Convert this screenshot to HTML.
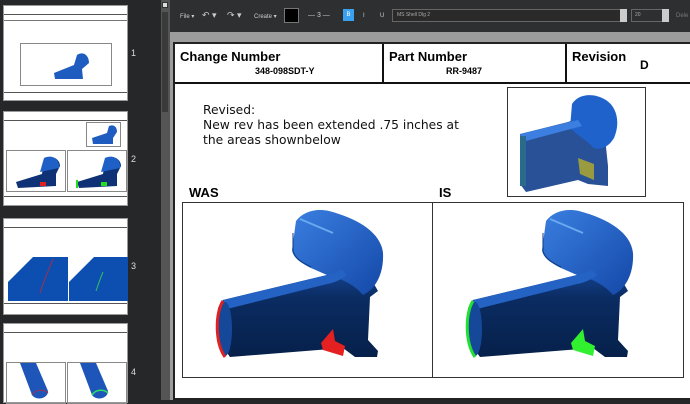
<!DOCTYPE html>
<html><head><meta charset="utf-8"><style>
*{margin:0;padding:0;box-sizing:border-box}
body{width:690px;height:400px;overflow:hidden;background:#262728;font-family:"Liberation Sans",sans-serif;position:relative}
.abs{position:absolute}
.th{position:absolute;left:3px;width:125px;background:#fff;border:1px solid #999}
.num{position:absolute;left:131px;color:#ddd;font-size:9px}
.tb{color:#ccc;font-size:6px;position:absolute;top:13px}
.hd{position:absolute;top:44px;height:40px;border-right:2px solid #111;border-bottom:2px solid #111}
.hd b{position:absolute;left:5px;top:5px;font-size:13px}
.hd i{position:absolute;font-style:normal;font-weight:bold;font-size:9px;top:22px}
</style></head><body>
<div class="th" style="top:5px;height:96px">
 <div class="abs" style="left:0;top:0;width:123px;height:9px;border-bottom:1px solid #555"></div>
 <div class="abs" style="left:0;top:9px;width:123px;height:6px;border-bottom:1px solid #777"></div>
 <div class="abs" style="left:16px;top:37px;width:92px;height:43px;border:1px solid #888"></div>
 <svg class="abs" style="left:45px;top:45px" width="45" height="32"><path d="M5,22 L25,14 L28,4 C34,0 40,4 40,12 L33,18 L34,28 L6,28 Z" fill="#1e5cc0"/></svg>
 <div class="abs" style="left:0;top:86px;width:123px;border-top:1px solid #555"></div>
</div>
<div class="num" style="top:48px">1</div>
<div class="th" style="top:111px;height:95px">
 <div class="abs" style="left:0;top:0;width:123px;height:9px;border-bottom:1px solid #555"></div>
 <div class="abs" style="left:82px;top:10px;width:35px;height:25px;border:1px solid #888"></div>
 <svg class="abs" style="left:85px;top:12px" width="30" height="22"><path d="M3,14 L18,9 L20,2 C25,0 28,3 28,8 L24,14 L24,20 L4,20 Z" fill="#1e5cc0"/></svg>
 <div class="abs" style="left:2px;top:38px;width:60px;height:42px;border:1px solid #888"></div>
 <div class="abs" style="left:63px;top:38px;width:60px;height:42px;border:1px solid #888"></div>
 <svg class="abs" style="left:8px;top:42px" width="110" height="36"><path d="M4,28 L30,20 L32,6 C38,0 48,4 48,12 L44,20 L44,32 L6,34 Z" fill="#0e3275"/><path d="M28,18 L32,4 C40,0 48,5 47,14 Z" fill="#1f60c6"/><rect x="28" y="28" width="6" height="4" fill="#e02020"/><path d="M65,28 L91,20 L93,6 C99,0 109,4 109,12 L105,20 L105,32 L67,34 Z" fill="#0e3275"/><path d="M89,18 L93,4 C101,0 109,5 108,14 Z" fill="#1f60c6"/><rect x="89" y="28" width="6" height="4" fill="#20e020"/><rect x="64" y="26" width="2" height="8" fill="#20e020"/></svg>
 <div class="abs" style="left:0;top:84px;width:123px;border-top:1px solid #555"></div>
</div>
<div class="num" style="top:154px">2</div>
<div class="th" style="top:218px;height:97px">
 <div class="abs" style="left:0;top:0;width:123px;height:9px;border-bottom:1px solid #555"></div>
 <svg class="abs" style="left:4px;top:38px" width="120" height="44"><path d="M0,25 L25,0 L60,0 L60,44 L0,44 Z" fill="#0d4fb0"/><path d="M61,25 L86,0 L120,0 L120,44 L61,44 Z" fill="#0d4fb0"/><path d="M45,2 C40,15 35,25 32,36" stroke="#a03050" fill="none"/><path d="M95,15 C92,22 90,28 88,34" stroke="#30c060" fill="none"/></svg>
 <div class="abs" style="left:0;top:84px;width:123px;border-top:1px solid #555"></div>
</div>
<div class="num" style="top:261px">3</div>
<div class="th" style="top:323px;height:80px">
 <div class="abs" style="left:0;top:0;width:123px;height:9px;border-bottom:1px solid #555"></div>
 <div class="abs" style="left:2px;top:38px;width:60px;height:42px;border:1px solid #888"></div>
 <div class="abs" style="left:63px;top:38px;width:60px;height:42px;border:1px solid #888"></div>
 <svg class="abs" style="left:4px;top:39px" width="120" height="40"><path d="M12,0 L28,0 L40,28 C40,36 28,38 24,32 Z" fill="#1d56b8"/><path d="M72,0 L88,0 L100,28 C100,36 88,38 84,32 Z" fill="#1d56b8"/><path d="M24,32 C28,26 36,26 40,30" stroke="#a03050" fill="none"/><path d="M84,32 C88,26 96,26 100,30" stroke="#30e060" stroke-width="1.5" fill="none"/></svg>
</div>
<div class="num" style="top:367px">4</div>
<div class="abs" style="left:161px;top:0;width:9px;height:400px;background:#555"></div>
<div class="abs" style="left:162px;top:2px;width:6px;height:6px;background:#ddd;border:1px solid #333"></div>
<div class="abs" style="left:162px;top:12px;width:6px;height:100px;background:#3a3a3a"></div>
<div class="abs" style="left:170px;top:0;width:520px;height:32px;background:#2e2f30"></div>
<div class="tb" style="left:180px">File ▾</div>
<div class="tb" style="left:202px;font-size:9px;top:10px">↶ ▾</div>
<div class="tb" style="left:227px;font-size:9px;top:10px">↷ ▾</div>
<div class="tb" style="left:254px">Create ▾</div>
<div class="abs" style="left:284px;top:8px;width:15px;height:15px;background:#000;border:1px solid #777"></div>
<div class="tb" style="left:308px;font-size:7px;top:12px">— 3 —</div>
<div class="abs" style="left:343px;top:9px;width:11px;height:12px;background:#3aa0f0;color:#fff;font-size:6px;text-align:center;line-height:12px">B</div>
<div class="tb" style="left:363px">I</div>
<div class="tb" style="left:380px">U</div>
<div class="abs" style="left:392px;top:9px;width:235px;height:13px;border:1px solid #666;background:#2a2a2a;color:#aaa;font-size:5px;padding:2px 4px">MS Shell Dlg 2</div>
<div class="abs" style="left:620px;top:9px;width:7px;height:13px;background:#ccc"></div>
<div class="abs" style="left:631px;top:9px;width:38px;height:13px;border:1px solid #666;color:#aaa;font-size:5px;padding:2px 3px">20</div>
<div class="abs" style="left:662px;top:9px;width:7px;height:13px;background:#ccc"></div>
<div class="tb" style="left:676px;color:#777">Dele</div>
<div class="abs" style="left:170px;top:32px;width:520px;height:368px;background:#9c9c9c"></div>
<div class="abs" style="left:173px;top:42px;width:517px;height:358px;background:#fff;border:2px solid #222;border-right:none"></div>
<div class="hd" style="left:175px;width:209px"><b>Change Number</b><i style="left:80px">348-098SDT-Y</i></div>
<div class="hd" style="left:384px;width:183px"><b>Part Number</b><i style="left:62px">RR-9487</i></div>
<div class="hd" style="left:567px;width:123px;border-right:none"><b>Revision</b><i style="left:73px;font-size:12px;top:14px">D</i></div>
<div class="abs" style="left:203px;top:103px;font-family:'DejaVu Sans',sans-serif;font-size:12.3px;line-height:15px;color:#111">Revised:<br>New rev has been extended .75 inches at<br>the areas shownbelow</div>
<div class="abs" style="left:507px;top:87px;width:139px;height:110px;border:1px solid #333"></div>
<svg class="abs" style="left:508px;top:88px" width="137" height="108" viewBox="0 0 137 108"><path d="M12,46 L60,34 C70,30 80,28 88,26 L96,40 L100,78 L100,98 L80,96 L70,92 L18,104 L12,96 Z" fill="#123e8c" opacity=".9"/><path d="M62,40 L64,16 C70,6 85,4 98,12 C110,20 112,36 106,50 C100,60 92,62 86,60 C78,52 68,46 62,40 Z" fill="#1f62cc"/><path d="M12,46 L70,32 L74,38 L14,54 Z" fill="#3d7fe0"/><rect x="12" y="48" width="6" height="50" fill="#2a6a8a"/><path d="M70,70 L86,76 L86,92 L72,86 Z" fill="#9a9a40"/></svg>
<div class="abs" style="left:189px;top:185px;font-weight:bold;font-size:13px">WAS</div>
<div class="abs" style="left:439px;top:185px;font-weight:bold;font-size:13px">IS</div>
<div class="abs" style="left:182px;top:202px;width:251px;height:176px;border:1px solid #333"></div>
<div class="abs" style="left:432px;top:202px;width:252px;height:176px;border:1px solid #333"></div>
<svg class="abs" style="left:183px;top:203px" width="501" height="174">
<defs>
<linearGradient id="bg" x1="0" y1="0" x2="0" y2="1"><stop offset="0" stop-color="#1a4fa8"/><stop offset="0.4" stop-color="#0b2c62"/><stop offset="1" stop-color="#06204a"/></linearGradient>
<linearGradient id="eg" x1="0" y1="0" x2="1" y2="1"><stop offset="0" stop-color="#3a7fe0"/><stop offset="1" stop-color="#1448a8"/></linearGradient>
<g id="pipe">
<path d="M40,97 L144,72 C160,68 170,62 176,55 L195,88 L187,94 L185,137 L195,148 L194,154 L172,154 L160,145 L47,154 L37,140 L35,105 Z" fill="url(#bg)"/>
<path d="M109,47 L113,18 C120,9 132,5 146,8 C176,16 198,30 200,50 C201,70 193,86 180,92 C170,80 156,75 144,72 L128,65 C118,60 110,55 109,47 Z" fill="url(#eg)"/>
<path d="M117,16 L150,30" stroke="#6aa8f0" stroke-width="2"/>
<path d="M40,97 L144,72 C150,71 154,69 158,66 L164,72 C156,78 150,80 144,81 L44,106 Z" fill="#2463c4"/>
<path d="M110,30 L110,48 C112,56 120,60 128,64" stroke="#0e3a80" fill="none"/>
</g></defs>
<use href="#pipe"/>
<ellipse cx="42" cy="126" rx="7" ry="27" fill="#16489a"/>
<path d="M40,98 C32,110 32,140 42,154" stroke="#e02020" stroke-width="3" fill="none"/>
<path d="M138,140 L150,126 L152,138 L162,143 L160,153 L140,147 Z" fill="#e52020"/>
<use href="#pipe" x="250"/>
<ellipse cx="292" cy="126" rx="7" ry="27" fill="#16489a"/>
<path d="M290,98 C282,110 282,140 292,154" stroke="#20e030" stroke-width="3" fill="none"/>
<path d="M388,140 L400,126 L402,138 L412,143 L410,153 L390,147 Z" fill="#30f030"/>
</svg>
</body></html>
